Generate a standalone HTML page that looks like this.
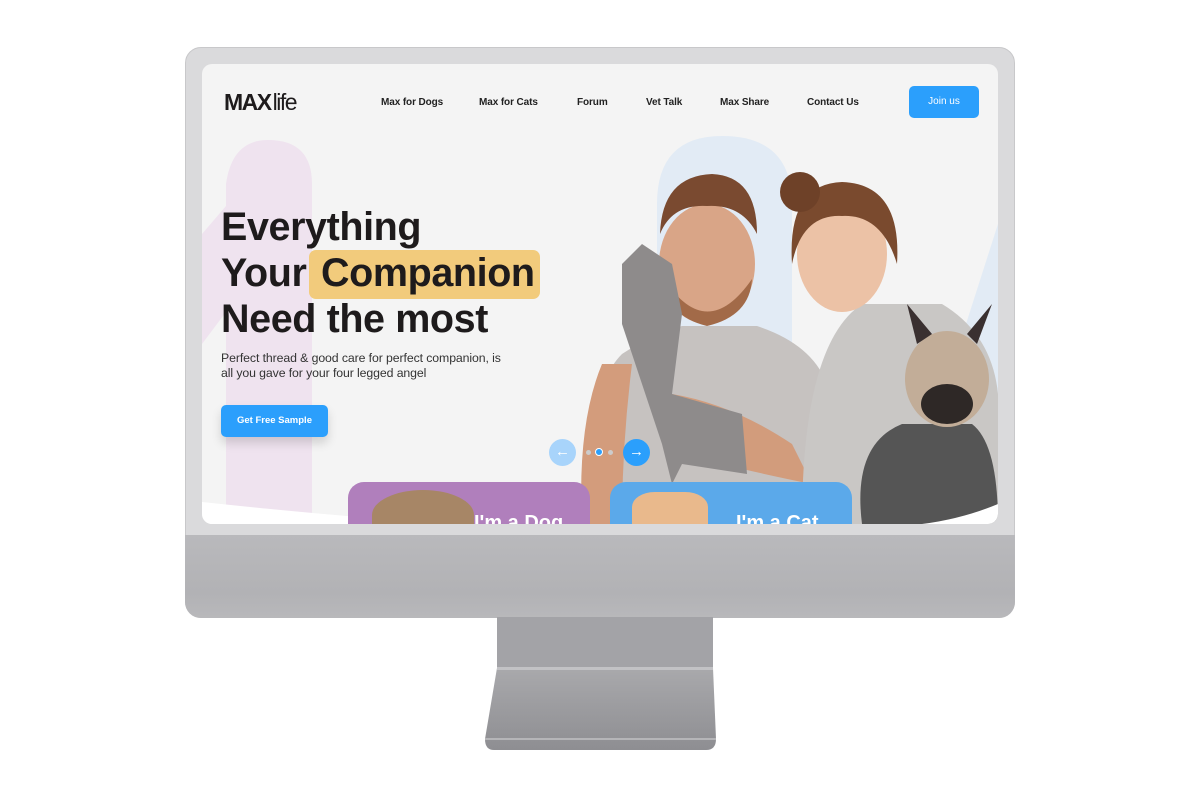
<!DOCTYPE html>
<html><head><style>
*{margin:0;padding:0;box-sizing:border-box}
body{width:1200px;height:800px;background:#fff;position:relative;overflow:hidden;font-family:"Liberation Sans",sans-serif}
.abs{position:absolute}
.frame{left:185px;top:47px;width:830px;height:571px;border-radius:16px;background:#dadadc;border:1px solid #c8c8ca;overflow:hidden}
.screen{left:202px;top:64px;width:796px;height:460px;border-radius:10px;background:#f4f4f4;overflow:hidden}
.chin{left:185px;top:535px;width:830px;height:83px;background:linear-gradient(#b9b9bc,#b2b2b5 70%,#b8b8bb);border-radius:0 0 16px 16px}
.nav{font-size:10px;color:#222;top:97px;font-weight:bold;letter-spacing:-.1px}
h1{position:absolute;left:221px;top:204px;font-size:39.5px;line-height:46px;color:#1e1b1c;font-weight:bold;letter-spacing:-.4px}
</style></head><body>
<div class="abs frame"></div>
<div class="abs chin"></div>
<svg class="abs" style="left:480px;top:617px" width="240" height="140">
<defs><linearGradient id="g" x1="0" y1="0" x2="0" y2="1"><stop offset="0" stop-color="#a9a9ac"/><stop offset="1" stop-color="#8e8e92"/></linearGradient></defs>
<path d="M17 0H233V51H17Z" fill="#a3a3a7"/>
<path d="M17 51H233L236 122Q236 133 226 133H14Q5 133 5 122Z" fill="url(#g)"/>
<rect x="17" y="50" width="216" height="3" fill="#c2c2c5"/>
<rect x="5" y="121" width="231" height="2" fill="#b5b5b8"/>
</svg>
<div class="abs screen">
<svg class="abs" style="left:0;top:0" width="796" height="460">
<path d="M24 120Q30 76 66 76Q110 76 110 120V460H24Z" fill="#efe3ef"/>
<path d="M0 170L60 100V200L0 280Z" fill="#efe3ef"/>
<path d="M455 460V140Q455 72 520 72Q590 72 590 140V460Z" fill="#e2ebf5"/>
<path d="M700 460L796 160V460Z" fill="#e2ebf5"/>
<path d="M390 460Q380 330 420 290Q450 270 480 262L555 262Q610 280 625 320L628 460Z" fill="#c6c2c0"/>
<ellipse cx="505" cy="200" rx="48" ry="60" fill="#d9a587"/>
<path d="M458 170Q460 112 510 110Q555 112 555 170Q540 140 505 142Q470 140 458 170Z" fill="#7a4a30"/>
<path d="M462 215Q505 280 550 215Q548 252 505 262Q464 252 462 215Z" fill="#a26a48"/>
<path d="M380 460Q375 360 400 300L430 300Q420 380 420 460Z" fill="#d39c7c"/>
<path d="M470 330Q530 340 590 380L610 420Q560 410 520 400Z" fill="#d29c7c"/>
<path d="M420 200L440 180L470 200L480 250L470 330L540 350L545 410L480 400L470 420L460 380L440 320L420 260Z" fill="#8e8b8b"/>
<path d="M600 460Q600 280 660 240L740 240Q790 270 796 330V460Z" fill="#c9c7c5"/>
<ellipse cx="640" cy="190" rx="45" ry="58" fill="#ecc2a6"/>
<path d="M590 200Q585 120 640 118Q700 120 695 200Q680 150 640 152Q600 150 590 200Z" fill="#7a4a2e"/>
<circle cx="598" cy="128" r="20" fill="#6e4128"/>
<path d="M660 460Q650 380 700 360L770 360Q796 380 796 460Z" fill="#555"/>
<ellipse cx="745" cy="315" rx="42" ry="48" fill="#c2ad98"/>
<path d="M715 280L705 240L730 270Z M775 280L790 240L765 270Z" fill="#3a3030"/>
<ellipse cx="745" cy="340" rx="26" ry="20" fill="#2e2826"/>
<path d="M0 438Q300 470 400 460H0Z" fill="#fff"/>
<path d="M796 440Q760 455 720 460H796Z" fill="#fff"/>
</svg>
<div class="abs" style="left:146px;top:418px;width:242px;height:60px;background:#b07fbc;border-radius:16px"></div>
<div class="abs" style="left:170px;top:426px;width:102px;height:50px;background:#a78666;border-radius:50% 50% 0 0"></div>
<div class="abs" style="left:272px;top:448px;color:#fff;font-weight:bold;font-size:20px">I'm a Dog</div>
<div class="abs" style="left:408px;top:418px;width:242px;height:60px;background:#5ba9ea;border-radius:16px"></div>
<div class="abs" style="left:430px;top:428px;width:76px;height:50px;background:#e9b98c;border-radius:30% 30% 0 0"></div>
<div class="abs" style="left:534px;top:448px;color:#fff;font-weight:bold;font-size:20px">I'm a Cat</div>
</div>
<div class="abs" style="left:224px;top:88px;font-size:23px;color:#1e1b1c;letter-spacing:-1.5px;line-height:28px"><b style="font-weight:900">MAX</b><span style="margin-left:2px">life</span></div>
<div class="abs nav" style="left:381px">Max for Dogs</div>
<div class="abs nav" style="left:479px">Max for Cats</div>
<div class="abs nav" style="left:577px">Forum</div>
<div class="abs nav" style="left:646px">Vet Talk</div>
<div class="abs nav" style="left:720px">Max Share</div>
<div class="abs nav" style="left:807px">Contact Us</div>
<div class="abs" style="left:909px;top:86px;width:70px;height:32px;background:#2b9ffc;border-radius:5px;color:#fff;font-size:10px;text-align:center;line-height:32px">Join us</div>
<div class="abs" style="left:309px;top:250px;width:231px;height:49px;background:#f2cb7c;border-radius:7px"></div>
<h1>Everything<br>Your <span style="margin-left:4px">Companion</span><br>Need the most</h1>
<div class="abs" style="left:221px;top:351px;font-size:12.3px;line-height:15px;color:#333;letter-spacing:-.1px">Perfect thread &amp; good care for perfect companion, is<br>all you gave for your four legged angel</div>
<div class="abs" style="left:221px;top:405px;width:107px;height:32px;background:#2b9ffc;border-radius:5px;color:#fff;font-size:9.5px;font-weight:bold;text-align:center;line-height:32px;box-shadow:0 6px 10px rgba(0,0,0,.15)">Get Free Sample</div>
<div class="abs" style="left:549px;top:439px;width:27px;height:27px;border-radius:50%;background:#a8d4fb;color:#fff;text-align:center;line-height:26px;font-size:15px">←</div>
<div class="abs" style="left:586px;top:450px;width:5px;height:5px;border-radius:50%;background:#ccc"></div>
<div class="abs" style="left:595px;top:448px;width:8px;height:8px;border-radius:50%;background:#2b9ffc;border:1px solid #fff"></div>
<div class="abs" style="left:608px;top:450px;width:5px;height:5px;border-radius:50%;background:#ccc"></div>
<div class="abs" style="left:623px;top:439px;width:27px;height:27px;border-radius:50%;background:#2b9ffc;color:#fff;text-align:center;line-height:26px;font-size:15px">→</div>
</body></html>
